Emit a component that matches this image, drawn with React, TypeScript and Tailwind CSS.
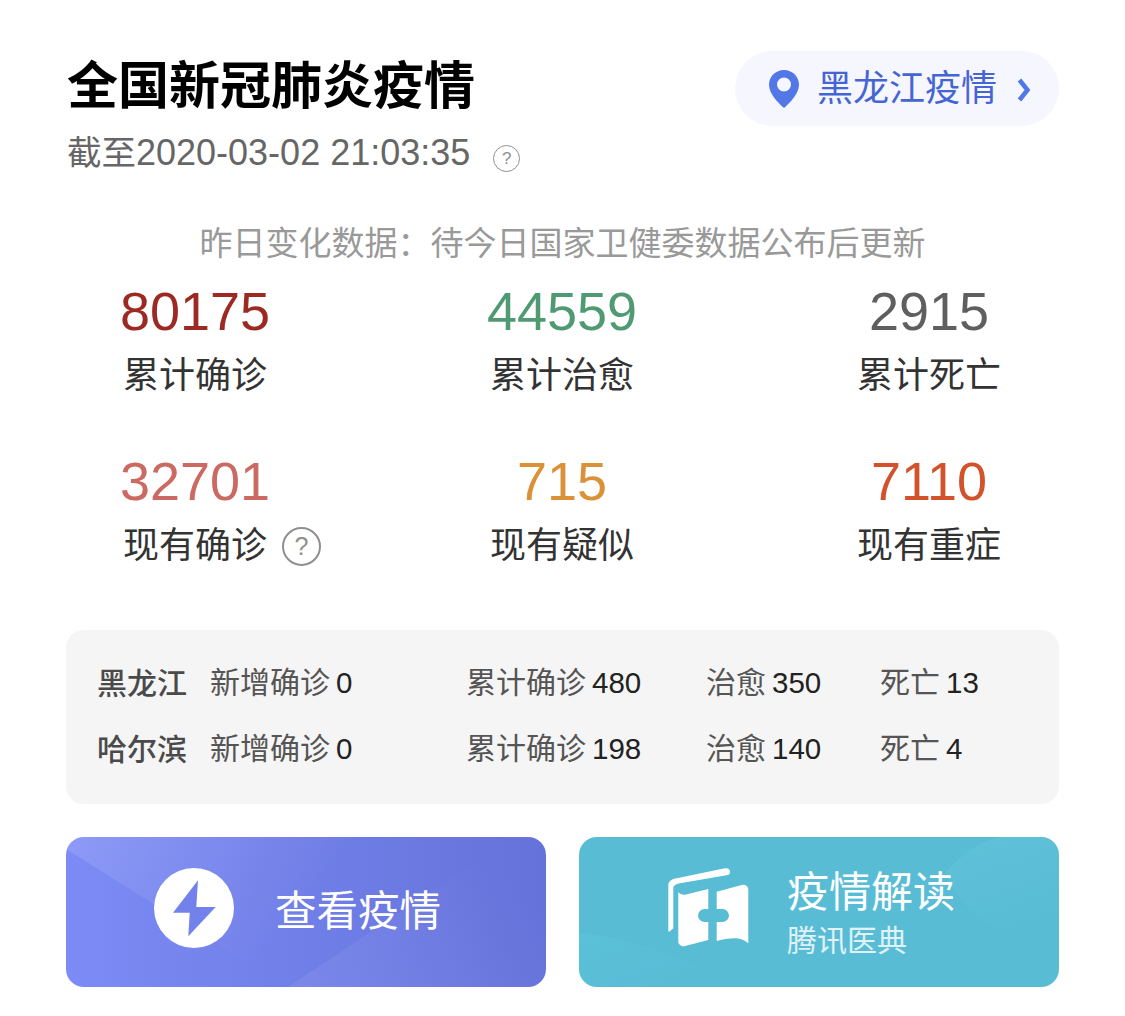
import React from 'react'

// Top level numbers
const stats = [
  { value: '80175', label: '累计确诊', color: 'text-[#9c2a22]' },
  { value: '44559', label: '累计治愈', color: 'text-[#4f9a72]' },
  { value: '2915', label: '累计死亡', color: 'text-[#5f5f5f]' },
  { value: '32701', label: '现有确诊', color: 'text-[#cb6a62]', help: true },
  { value: '715', label: '现有疑似', color: 'text-[#da9138]' },
  { value: '7110', label: '现有重症', color: 'text-[#d2522c]' },
]

const regions = [
  { name: '黑龙江', added: '0', total: '480', cured: '350', dead: '13' },
  { name: '哈尔滨', added: '0', total: '198', cured: '140', dead: '4' },
]

const HelpIcon = ({ className }: { className: string }) => (
  <span
    className={`inline-flex items-center justify-center rounded-full border-2 border-[#8f8f8f] text-[#8f8f8f] ${className}`}
  >
    ?
  </span>
)

const Cell = ({ label, value }: { label: string; value: string }) => (
  <div className="whitespace-nowrap">
    <span className="text-[#555]">{label}</span>
    <span className="ml-[6px] text-[29.5px] text-[#222]">{value}</span>
  </div>
)

const App: React.FC = () => {
  return (
    <div className="w-[1125px] h-[1016px] bg-white px-[66px] pt-[51px] font-['Liberation_Sans','Noto_Sans_CJK_SC',sans-serif] overflow-hidden">
      {/* Header */}
      <div className="flex justify-between items-start">
        <div className="pl-[1px]">
          <h1 className="mt-[8px] text-[51px] leading-[56px] font-bold text-black">全国新冠肺炎疫情</h1>
          <div className="mt-[17px] flex items-center text-[36px] leading-[42px] text-[#666]">
            <span className="text-[34.5px]">截至</span>2020-03-02 21:03:35
            <HelpIcon className="ml-[23px] mt-[10px] w-[27px] h-[27px] !border-[1.5px] text-[17px] leading-none" />
          </div>
        </div>
        <div className="w-[324px] h-[75px] rounded-full bg-[#f5f6fe] flex items-center pl-[34px]">
          <svg width="30" height="38" viewBox="0 0 30 38">
            <path
              fillRule="evenodd"
              fill="#5277e6"
              d="M15 0C6.700 0 0 6.600 0 14.700 0 24 10 33.500 15 38c5-4.500 15-14 15-23.300C30 6.600 23.300 0 15 0zm0 7.500a7 7 0 1 1 0 14 7 7 0 0 1 0-14z"
            />
          </svg>
          <span className="ml-[18px] text-[36px] leading-none text-[#4565d4]">黑龙江疫情</span>
          <svg className="ml-[20px] mt-[3px]" width="14" height="26" viewBox="0 0 14 26">
            <path d="M2.500 3L10.500 13 2.500 23" fill="none" stroke="#5277e6" strokeWidth="4.500" />
          </svg>
        </div>
      </div>

      {/* Notice */}
      <p className="mt-[50px] text-center text-[33px] leading-[40px] text-[#999]">
        昨日变化数据：待今日国家卫健委数据公布后更新
      </p>

      {/* Stats */}
      <div className="mt-[16px] grid grid-cols-[repeat(3,367px)] gap-y-[43px] -ml-[54.5px]">
        {stats.map((s) => (
          <div key={s.label} className="flex flex-col items-center">
            <div className={`text-[54px] leading-[62px] ${s.color}`}>{s.value}</div>
            <div className="relative mt-[3px] text-[36px] leading-[62px] text-[#333]">
              {s.label}
              {s.help && (
                <HelpIcon className="absolute left-[159px] top-[12px] w-[39px] h-[39px] text-[25px] leading-none" />
              )}
            </div>
          </div>
        ))}
      </div>

      {/* Region table */}
      <div className="mt-[53px] h-[174px] rounded-[18px] bg-[#f5f5f5] pl-[31px] pt-[20px] text-[30px]">
        {regions.map((r) => (
          <div key={r.name} className="grid grid-cols-[113px_256px_240px_174px_1fr] h-[66px] items-center">
            <div className="font-medium text-[#4a4a4a]">{r.name}</div>
            <Cell label="新增确诊" value={r.added} />
            <Cell label="累计确诊" value={r.total} />
            <Cell label="治愈" value={r.cured} />
            <Cell label="死亡" value={r.dead} />
          </div>
        ))}
      </div>

      {/* Buttons */}
      <div className="mt-[33px] grid grid-cols-2 gap-[33px]">
        <div className="relative h-[150px] rounded-[18px] overflow-hidden bg-gradient-to-r from-[#7c8bf5] to-[#6572da] flex items-center pl-[88px]">
          <svg className="absolute inset-0" width="480" height="150" viewBox="0 0 480 150">
            <defs>
              <linearGradient id="sheen" x1="0" y1="0" x2="0.800" y2="0.300">
                <stop offset="0" stopColor="#fff" stopOpacity="0.13" />
                <stop offset="1" stopColor="#fff" stopOpacity="0" />
              </linearGradient>
              <linearGradient id="band" x1="0.100" y1="1" x2="1" y2="0.500">
                <stop offset="0" stopColor="#fff" stopOpacity="0.07" />
                <stop offset="1" stopColor="#fff" stopOpacity="0" />
              </linearGradient>
            </defs>
            <path d="M0 12L220 150H320V0H0z" fill="url(#sheen)" />
            <path d="M222 150L420 18 480 0V150z" fill="url(#band)" />
          </svg>
          <svg className="relative mb-[8px]" width="80" height="80" viewBox="0 0 80 80">
            <circle cx="40" cy="40" r="40" fill="#fff" />
            <path d="M44 12.300L19 44.700h16.700L34.300 68.300 61.700 39H42.300z" fill="#7382ea" />
          </svg>
          <span className="relative ml-[41px] text-[41.500px] leading-none text-white">查看疫情</span>
        </div>

        <div className="relative h-[150px] rounded-[18px] overflow-hidden bg-[#58bcd5] flex items-center pl-[89px]">
          <svg className="absolute inset-0" width="480" height="150" viewBox="0 0 480 150">
            <defs>
              <linearGradient id="low" x1="0" y1="0" x2="0.800" y2="0.600">
                <stop offset="0" stopColor="#5ecbdf" stopOpacity="0.350" />
                <stop offset="1" stopColor="#5ecbdf" stopOpacity="0" />
              </linearGradient>
              <linearGradient id="high" x1="0.300" y1="0" x2="0.700" y2="1">
                <stop offset="0" stopColor="#64c4da" stopOpacity="0.600" />
                <stop offset="1" stopColor="#64c4da" stopOpacity="0" />
              </linearGradient>
            </defs>
            <path d="M0 96C60 100 110 130 190 150H0z" fill="url(#low)" />
            <path d="M418 0C395 8 380 20 366 36 390 90 440 110 480 100V0z" fill="url(#high)" />
          </svg>
          <svg className="relative mb-[8px]" width="81" height="80" viewBox="0 0 81 80">
            <path
              fill="#fff"
              d="M.300 17C.300 13.500 4 10.800 8.700 10.300L57 .300c3-.500 5 1 5 3.400 0 1.800-.800 3-2 3.300L12 15.300c-4 .800-6.700 2.500-6.700 5V60.300L1.300 63.700C.500 64 .300 63 .300 62z"
            />
            <path fill="#fff" d="M10.300 24C12 26 14 27 17 26.700L40.300 21V72L17 78c-4 1-6.700-2-6.700-4.300z" />
            <path
              fill="#fff"
              d="M48.700 23.700L73.700 17c4-.800 6.600 1.500 6.600 5V75.300C76 72 72 70.500 68.700 70.300 62 70 54 71.500 48.700 73z"
            />
            <rect x="30" y="41" width="31" height="13" rx="6.500" fill="#58bcd5" />
          </svg>
          <div className="relative ml-[38px] mt-[4px] text-white">
            <div className="text-[42px] leading-[48px]">疫情解读</div>
            <div className="mt-[6px] text-[30px] leading-[36px] text-white/80">腾讯医典</div>
          </div>
        </div>
      </div>
    </div>
  )
}

export default App
